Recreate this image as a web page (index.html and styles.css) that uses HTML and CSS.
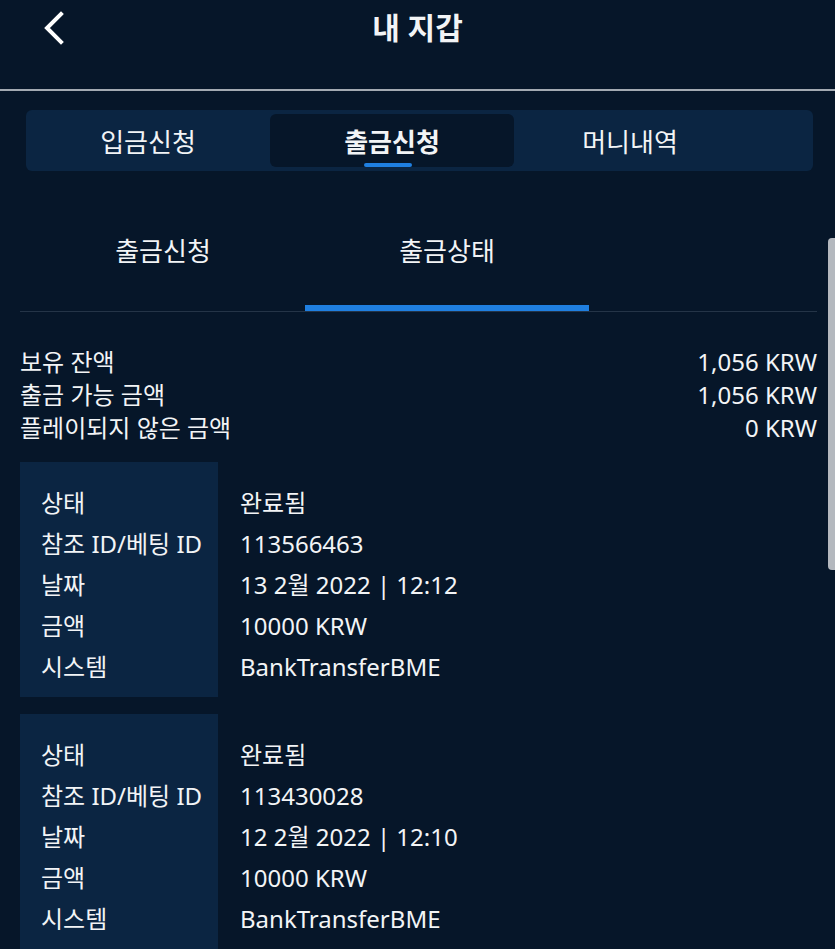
FILE: index.html
```html
<!DOCTYPE html>
<html lang="ko">
<head>
    <meta charset="UTF-8">
    <meta name="viewport" content="width=device-width, initial-scale=1.0">
    <title>내 지갑</title>
    <link rel="stylesheet" href="styles.css">
</head>
<body>
    <header class="top-bar">
        <a class="back" href="#">
            <svg width="24" height="34" viewBox="0 0 24 34">
                <path d="M19 3 L5 17 L19 31" fill="none" stroke="#fff" stroke-width="4" stroke-linecap="square"/>
            </svg>
        </a>
        <h1>내 지갑</h1>
    </header>

    <nav class="main-tabs">
        <div class="main-tab">입금신청</div>
        <div class="main-tab active">출금신청</div>
        <div class="main-tab">머니내역</div>
    </nav>

    <nav class="sub-tabs">
        <div class="sub-tab">출금신청</div>
        <div class="sub-tab active">출금상태</div>
    </nav>

    <div class="summary">
        <div class="summary-row"><span>보유 잔액</span><span>1,056 KRW</span></div>
        <div class="summary-row"><span>출금 가능 금액</span><span>1,056 KRW</span></div>
        <div class="summary-row"><span>플레이되지 않은 금액</span><span>0 KRW</span></div>
    </div>

    <div class="history">
        <div class="record">
            <div class="labels">
                <div>상태</div>
                <div>참조 ID/베팅 ID</div>
                <div>날짜</div>
                <div>금액</div>
                <div>시스템</div>
            </div>
            <div class="values">
                <div>완료됨</div>
                <div>113566463</div>
                <div>13 2월 2022 | 12:12</div>
                <div>10000 KRW</div>
                <div>BankTransferBME</div>
            </div>
        </div>
        <div class="record">
            <div class="labels">
                <div>상태</div>
                <div>참조 ID/베팅 ID</div>
                <div>날짜</div>
                <div>금액</div>
                <div>시스템</div>
            </div>
            <div class="values">
                <div>완료됨</div>
                <div>113430028</div>
                <div>12 2월 2022 | 12:10</div>
                <div>10000 KRW</div>
                <div>BankTransferBME</div>
            </div>
        </div>
    </div>

    <div class="scroll-thumb"></div>
</body>
</html>
```

FILE: styles.css
```css
/* Page */
body {
    margin: 0;
    background: #061629;
    color: #f2f4f6;
    font-family: 'Noto Sans', 'Noto Sans CJK KR', sans-serif;
    overflow: hidden;
    height: 949px;
}

/* Header */
.top-bar {
    height: 89px;
    border-bottom: 2px solid #a3aab2;
    display: flex;
    justify-content: center;
    position: relative;
}

.top-bar h1 {
    margin: 0;
    font-size: 30px;
    font-weight: bold;
    line-height: 56px;
}

.back {
    position: absolute;
    left: 42px;
    top: 11px;
}

/* Main tabs */
.main-tabs {
    display: flex;
    margin: 19px 22px 0 26px;
    height: 61px;
    padding: 4px 0;
    box-sizing: border-box;
    background: #0b2542;
    border-radius: 6px;
}

.main-tab {
    width: 244px;
    display: flex;
    justify-content: center;
    align-items: center;
    font-size: 26px;
    position: relative;
    border-radius: 6px;
}

.main-tab:last-child {
    width: 232px;
}

.main-tab.active {
    background: #061629;
    font-weight: bold;
}

.main-tab.active::after {
    content: "";
    position: absolute;
    bottom: 0;
    left: 94px;
    width: 48px;
    height: 4px;
    border-radius: 2px;
    background: #1f7fe0;
}

/* Sub tabs */
.sub-tabs {
    display: flex;
    margin: 0 18px 0 20px;
    border-bottom: 1px solid #243447;
}

.sub-tab {
    width: 284px;
    text-align: center;
    font-size: 26px;
    line-height: 40px;
    padding: 60px 0 34px;
    border-bottom: 6px solid transparent;
}

.sub-tab:first-child {
    margin-left: 1px;
}

.sub-tab.active {
    border-bottom-color: #1f7fe0;
}

/* Balance summary */
.summary {
    margin: 33px 18px 0 20px;
    font-size: 24px;
}

.summary-row {
    display: flex;
    justify-content: space-between;
    line-height: 33px;
}

/* Withdrawal records */
.history {
    margin: 18px 0 0 20px;
    display: flex;
    flex-direction: column;
    gap: 17px;
}

.record {
    display: flex;
    font-size: 24px;
}

.record .labels {
    width: 198px;
    box-sizing: border-box;
    padding: 20px 0 10px 21px;
    background: #0b2542;
}

.record .values {
    padding: 20px 0 10px 22px;
}

.record .labels div,
.record .values div {
    line-height: 41px;
    white-space: nowrap;
}

/* Scroll indicator */
.scroll-thumb {
    position: absolute;
    right: 0;
    top: 238px;
    width: 7px;
    height: 332px;
    background: #b4b8be;
    border-radius: 4px 0 0 4px;
}
```
